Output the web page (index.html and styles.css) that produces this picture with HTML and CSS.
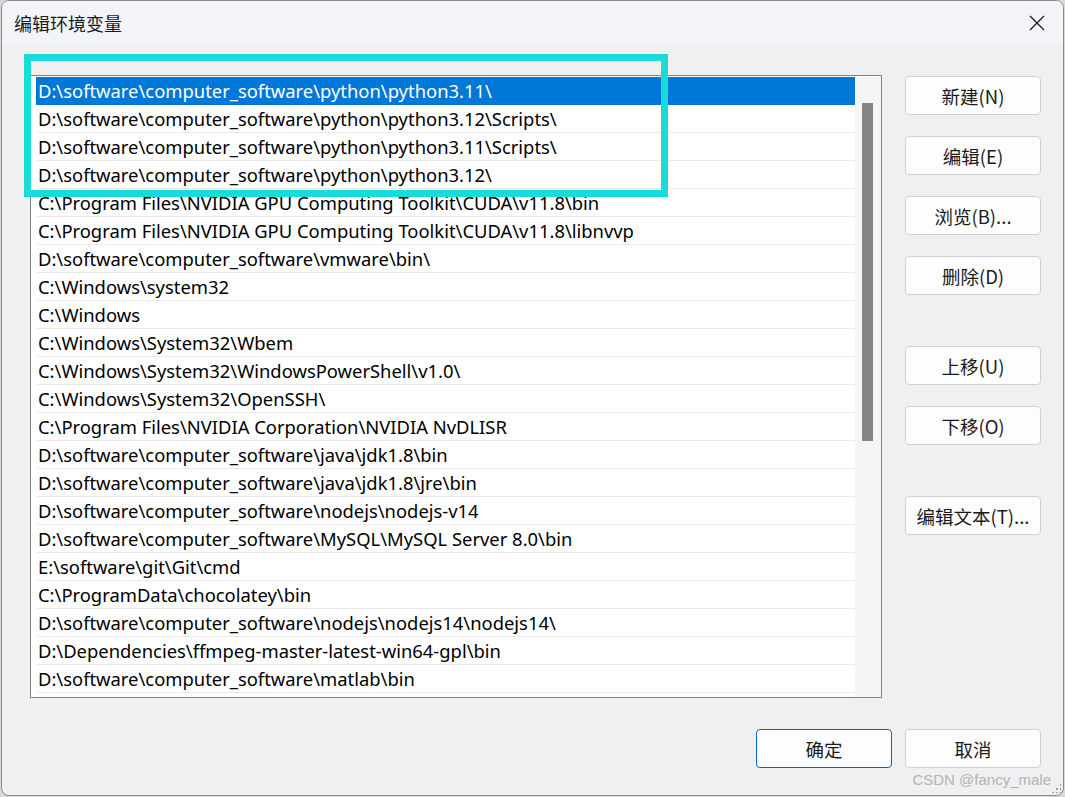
FILE: index.html
```html
<!DOCTYPE html>
<html lang="zh-CN">
<head>
<meta charset="utf-8">
<title>编辑环境变量</title>
<link rel="stylesheet" href="styles.css">
</head>
<body>
<div class="window">
  <div class="titlebar">
    <span class="title">编辑环境变量</span>
    <span class="close" aria-label="关闭">
      <svg width="16" height="16" viewBox="0 0 16 16"><path d="M1 1 L15 15 M15 1 L1 15" stroke="#1a1a1a" stroke-width="1.3" fill="none"/></svg>
    </span>
  </div>
  <div class="main">
    <div class="listbox">
      <ul class="items">
        <li class="sel">D:\software\computer_software\python\python3.11\</li>
        <li>D:\software\computer_software\python\python3.12\Scripts\</li>
        <li>D:\software\computer_software\python\python3.11\Scripts\</li>
        <li>D:\software\computer_software\python\python3.12\</li>
        <li>C:\Program Files\NVIDIA GPU Computing Toolkit\CUDA\v11.8\bin</li>
        <li>C:\Program Files\NVIDIA GPU Computing Toolkit\CUDA\v11.8\libnvvp</li>
        <li>D:\software\computer_software\vmware\bin\</li>
        <li>C:\Windows\system32</li>
        <li>C:\Windows</li>
        <li>C:\Windows\System32\Wbem</li>
        <li>C:\Windows\System32\WindowsPowerShell\v1.0\</li>
        <li>C:\Windows\System32\OpenSSH\</li>
        <li>C:\Program Files\NVIDIA Corporation\NVIDIA NvDLISR</li>
        <li>D:\software\computer_software\java\jdk1.8\bin</li>
        <li>D:\software\computer_software\java\jdk1.8\jre\bin</li>
        <li>D:\software\computer_software\nodejs\nodejs-v14</li>
        <li>D:\software\computer_software\MySQL\MySQL Server 8.0\bin</li>
        <li>E:\software\git\Git\cmd</li>
        <li>C:\ProgramData\chocolatey\bin</li>
        <li>D:\software\computer_software\nodejs\nodejs14\nodejs14\</li>
        <li>D:\Dependencies\ffmpeg-master-latest-win64-gpl\bin</li>
        <li>D:\software\computer_software\matlab\bin</li>
      </ul>
      <div class="scrollbar"><div class="thumb"></div></div>
    </div>
    <div class="side">
      <button class="btn">新建(N)</button>
      <button class="btn">编辑(E)</button>
      <button class="btn">浏览(B)...</button>
      <button class="btn">删除(D)</button>
      <button class="btn gap">上移(U)</button>
      <button class="btn">下移(O)</button>
      <button class="btn gap">编辑文本(T)...</button>
    </div>
  </div>
  <div class="footer">
    <button class="btn primary">确定</button>
    <button class="btn">取消</button>
  </div>
  <div class="mark"></div>
  <div class="watermark">CSDN @fancy_male</div>
  <div class="grip"></div>
</div>
</body>
</html>
```
FILE: styles.css
```css
html, body {
  margin: 0;
  padding: 0;
}
body {
  background: #d9d9d9;
  width: 1065px;
  height: 797px;
  overflow: hidden;
  font-family: "Noto Sans", "Noto Sans CJK SC", sans-serif;
}
.window {
  position: relative;
  box-sizing: border-box;
  width: 1063px;
  height: 796px;
  margin-left: 1px;
  border: 1px solid #8a8a8a;
  border-radius: 8px;
  background: #f0f0f0;
  overflow: hidden;
}
.titlebar {
  height: 44px;
  background: #f3f4f8;
  display: flex;
  align-items: center;
  justify-content: space-between;
  padding: 0 18px 0 12px;
}
.title {
  font-family: "Noto Sans CJK SC", sans-serif;
  font-size: 18px;
  color: #1a1a1a;
}
.close {
  display: flex;
  width: 16px;
  height: 16px;
}
.main {
  display: flex;
  padding: 30px 0 0 28px;
  gap: 23px;
}
.listbox {
  box-sizing: border-box;
  width: 852px;
  height: 623px;
  border: 1px solid #828282;
  background: #ffffff;
  display: flex;
  padding: 1px 0 0 5px;
}
.items {
  list-style: none;
  margin: 0;
  padding: 0;
  width: 819px;
  overflow: hidden;
}
.items li {
  box-sizing: border-box;
  height: 28px;
  line-height: 27px;
  padding-left: 2px;
  border-bottom: 1px solid #ebebeb;
  font-family: "Noto Sans", sans-serif;
  font-size: 18.4px;
  color: #000;
  white-space: nowrap;
}
.items li.sel {
  background: #0078d7;
  color: #fff;
  border-bottom-color: #0078d7;
}
.scrollbar {
  width: 26px;
  background: #f5f5f5;
  padding: 26px 0 0 7px;
  box-sizing: border-box;
}
.thumb {
  width: 11px;
  height: 338px;
  background: #858585;
}
.side {
  display: flex;
  flex-direction: column;
  gap: 21px;
  margin-top: 1px;
}
.side .gap {
  margin-top: 30px;
}
.btn {
  box-sizing: border-box;
  width: 136px;
  height: 39px;
  border: 1px solid #d0d0d0;
  border-radius: 4px;
  background: #fdfdfd;
  font-family: "Noto Sans CJK SC", sans-serif;
  font-size: 18.5px;
  color: #1a1a1a;
  padding: 0;
}
.btn.primary {
  border-color: #0067c0;
}
.footer {
  display: flex;
  justify-content: flex-end;
  gap: 13px;
  padding: 31px 22px 0 0;
}
.mark {
  position: absolute;
  left: 22px;
  top: 53px;
  width: 644px;
  height: 143px;
  box-sizing: border-box;
  border: 7px solid #19dcd9;
}
.watermark {
  position: absolute;
  right: 12px;
  bottom: 7px;
  font-family: "Liberation Sans", sans-serif;
  font-size: 15px;
  color: #b4b4b4;
}
.grip {
  position: absolute;
  right: 2px;
  bottom: 2px;
  width: 10px;
  height: 10px;
  background:
    radial-gradient(circle, #a0a0a0 1px, transparent 1.2px) 0 0 / 4px 4px;
  clip-path: polygon(100% 0, 100% 100%, 0 100%);
}
```
